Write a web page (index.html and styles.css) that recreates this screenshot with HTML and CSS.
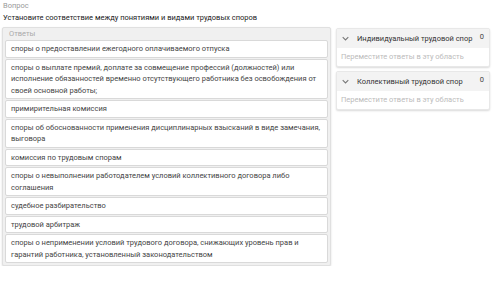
FILE: index.html
```html
<!DOCTYPE html>
<html lang="ru">
<head>
    <meta charset="UTF-8">
    <title>Вопрос</title>
    <link rel="stylesheet" href="styles.css">
</head>
<body>
    <div class="question">
        <div class="q-label">Вопрос</div>
        <div class="q-text">Установите соответствие между понятиями и видами трудовых споров</div>
    </div>

    <div class="layout">
        <div class="answers">
            <div class="answers-label">Ответы</div>
            <div class="answer">споры о предоставлении ежегодного оплачиваемого отпуска</div>
            <div class="answer">споры о выплате премий, доплате за совмещение профессий (должностей) или исполнение обязанностей временно отсутствующего работника без освобождения от своей основной работы;</div>
            <div class="answer">примирительная комиссия</div>
            <div class="answer">споры об обоснованности применения дисциплинарных взысканий в виде замечания, выговора</div>
            <div class="answer">комиссия по трудовым спорам</div>
            <div class="answer">споры о невыполнении работодателем условий коллективного договора либо соглашения</div>
            <div class="answer">судебное разбирательство</div>
            <div class="answer">трудовой арбитраж</div>
            <div class="answer">споры о неприменении условий трудового договора, снижающих уровень прав и гарантий работника, установленный законодательством</div>
        </div>

        <div class="groups">
            <div class="group">
                <div class="group-head">
                    <svg class="chevron" viewBox="0 0 10 6" width="7" height="5"><path d="M1 1 L5 5 L9 1" fill="none" stroke="#777" stroke-width="1.5"/></svg>
                    <span class="group-title">Индивидуальный трудовой спор</span>
                    <span class="group-count">0</span>
                </div>
                <div class="group-body">Переместите ответы в эту область</div>
            </div>
            <div class="group">
                <div class="group-head">
                    <svg class="chevron" viewBox="0 0 10 6" width="7" height="5"><path d="M1 1 L5 5 L9 1" fill="none" stroke="#777" stroke-width="1.5"/></svg>
                    <span class="group-title">Коллективный трудовой спор</span>
                    <span class="group-count">0</span>
                </div>
                <div class="group-body">Переместите ответы в эту область</div>
            </div>
        </div>
    </div>
</body>
</html>
```

FILE: styles.css
```css
* {
    margin: 0;
    padding: 0;
    box-sizing: border-box;
}

body {
    background: #fff;
    color: #333;
    font-family: Roboto, "Liberation Sans", sans-serif;
    font-size: 7.5px;
    padding: 0 2px;
}

.q-label {
    color: #999;
    line-height: 12px;
    padding-left: 1px;
}

.q-text {
    color: #222;
    line-height: 12px;
    padding-left: 1px;
    margin-bottom: 3px;
}

.layout {
    display: flex;
    align-items: flex-start;
    gap: 5px;
}

.answers {
    width: 329px;
    background: #f0f0f0;
    border: 1px solid #e0e0e0;
    border-radius: 2px;
    box-shadow: 0 1px 2px rgba(0, 0, 0, 0.15);
    padding: 1px 2px 2px;
    display: flex;
    flex-direction: column;
    gap: 1px;
}

.answers-label {
    color: #aaa;
    line-height: 10px;
    padding-left: 4px;
}

.answer {
    background: #fff;
    border: 1px solid #d9d9d9;
    border-radius: 2px;
    padding: 2px 5px;
    line-height: 11.5px;
    color: #444;
}

.groups {
    width: 154px;
    margin-top: 1px;
    display: flex;
    flex-direction: column;
    gap: 4px;
}

.group {
    background: #fff;
    border: 1px solid #e8e8e8;
    border-radius: 2px;
    box-shadow: 0 1px 2px rgba(0, 0, 0, 0.15);
}

.group-head {
    display: flex;
    align-items: center;
    background: #f3f3f3;
    height: 19px;
    padding: 0 5px 0 5px;
}

.chevron {
    margin-right: 8px;
}

.group-title {
    flex: 1;
    color: #333;
}

.group-count {
    color: #444;
    align-self: flex-start;
    margin-top: 3px;
}

.group-body {
    color: #bbb;
    padding: 5px 4px 5px;
    line-height: 8px;
}
```
